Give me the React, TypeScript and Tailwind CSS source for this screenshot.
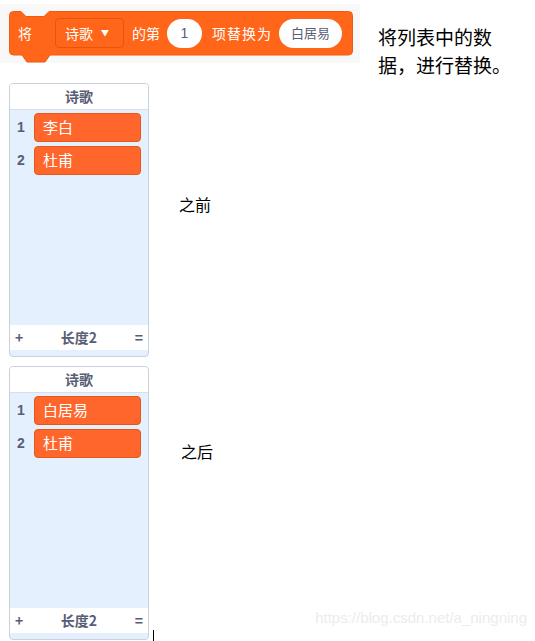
const cjk = { fontFamily: '"Noto Sans CJK SC", "Noto Sans", sans-serif' }

function Block() {
  return (
    <div className="relative ml-[9px] mt-[7px] h-[52px] w-[344px]">
      <svg className="absolute inset-0" width="344" height="52" viewBox="0 0 344 52">
        <path
          d="M0.5,4.5 a4,4 0 0 1 4,-4 H12 l5,5 h18 l5,-5 H339.5 a4,4 0 0 1 4,4 V40 a4,4 0 0 1 -4,4 H41 l-5,7 h-18 l-5,-7 H4.5 a4,4 0 0 1 -4,-4 Z"
          fill="#ff661a"
          stroke="#f05a10"
          strokeWidth="1"
        />
      </svg>
      <div className="relative flex h-[44px] items-center text-[14px] text-white" style={cjk}>
        <span className="ml-[9px]">将</span>
        <div className="ml-[23px] flex h-[30px] w-[69px] items-center rounded-[4px] border border-[#e3560f] bg-[#ff661a] pl-[9px]">
          <span>诗歌</span>
          <span className="ml-[8px] text-[8px]">▼</span>
        </div>
        <span className="ml-[8px]">的第</span>
        <div className="ml-[7px] flex h-[29px] w-[35px] items-center justify-center rounded-full bg-white text-[#575e75]" style={{ fontFamily: '"Liberation Sans", sans-serif' }}>
          1
        </div>
        <span className="ml-[10px] tracking-[1px]">项替换为</span>
        <div className="ml-[7px] flex h-[29px] w-[63px] items-center justify-center rounded-full bg-white text-[13px] text-[#575e75]">
          白居易
        </div>
      </div>
    </div>
  )
}

function ListMonitor({ items, bodyHeight }: { items: string[]; bodyHeight: number }) {
  return (
    <div className="w-[140px] overflow-hidden rounded-[4px] border border-[#c9d1dd] bg-[#e5f0ff]" style={cjk}>
      <div className="flex h-[26px] items-center justify-center border-b border-[#d9dfe8] bg-white text-[14px] font-bold text-[#575e75]">
        诗歌
      </div>
      <div className="flex flex-col gap-[4px] pt-[3px]" style={{ height: bodyHeight }}>
        {items.map((item, i) => (
          <div key={item} className="flex items-center">
            <span className="w-[24px] pl-[7px] text-[14px] font-bold text-[#575e75]" style={{ fontFamily: '"Liberation Sans", sans-serif' }}>
              {i + 1}
            </span>
            <div className="flex h-[29px] w-[107px] items-center rounded-[4px] border border-[#e4581a] bg-[#ff662b] pl-[8px] text-[15px] text-white">
              {item}
            </div>
          </div>
        ))}
      </div>
      <div className="flex h-[25px] items-center justify-between bg-white px-[5px] text-[14px] font-bold text-[#575e75]">
        <span>+</span>
        <span>长度2</span>
        <span>=</span>
      </div>
      <div className="h-[6px]" />
    </div>
  )
}

export default function App() {
  return (
    <div className="relative h-[641px] w-[535px] overflow-hidden bg-white">
      <div className="flex h-[63px]">
        <div className="mt-[4px] h-[59px] w-[360px] bg-[#f8f8f8]">
          <Block />
        </div>
        <p className="ml-[18px] mt-[23px] text-[19px] leading-[28px] text-black" style={cjk}>
          将列表中的数
          <br />
          据，进行替换。
        </p>
      </div>

      <div className="mt-[20px] flex">
        <div className="ml-[9px]">
          <ListMonitor items={['李白', '杜甫']} bodyHeight={215} />
        </div>
        <p className="ml-[30px] mt-[109px] text-[16px] text-black" style={cjk}>
          之前
        </p>
      </div>

      <div className="mt-[9px] flex">
        <div className="ml-[9px]">
          <ListMonitor items={['白居易', '杜甫']} bodyHeight={215} />
        </div>
        <div className="flex flex-col">
          <p className="ml-[32px] mt-[73px] text-[16px] text-black" style={cjk}>
            之后
          </p>
          <div className="ml-[4px] mt-[167px] h-[13px] w-px bg-black" />
        </div>
      </div>

      <span
        className="absolute bottom-[12px] right-[8px] text-[15px] text-[#ececec]"
        style={{ fontFamily: '"Liberation Sans", sans-serif' }}
      >
        https://blog.csdn.net/a_ningning
      </span>
    </div>
  )
}
